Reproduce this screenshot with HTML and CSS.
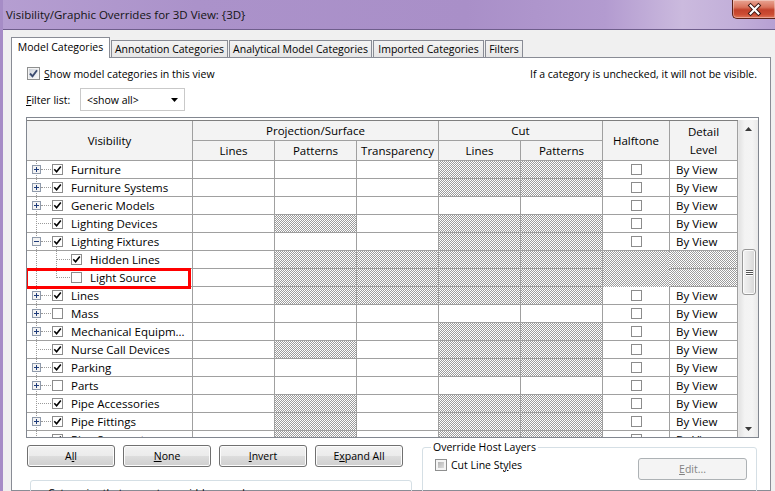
FILE: index.html
```html
<!DOCTYPE html>
<html>
<head>
<meta charset="utf-8">
<title>Visibility/Graphic Overrides</title>
<link rel="stylesheet" href="styles.css">
</head>
<body>
<div class="win">
  <div class="titlebar">
    <span class="title">Visibility/Graphic Overrides for 3D View: {3D}</span>
    <div class="close">
      <svg width="43" height="19" viewBox="0 0 43 19"><path d="M18 5.5 L26 13.5 M26 5.5 L18 13.5" stroke="#3a1510" stroke-width="4.2" stroke-linecap="square"/><path d="M18 5.5 L26 13.5 M26 5.5 L18 13.5" stroke="#fff" stroke-width="2.2" stroke-linecap="square"/></svg>
    </div>
  </div>
  <div class="client">
    <div class="tabs">
      <div class="tab sel">Model Categories</div>
      <div class="tab w-ann">Annotation Categories</div>
      <div class="tab w-anl">Analytical Model Categories</div>
      <div class="tab w-imp">Imported Categories</div>
      <div class="tab w-fil">Filters</div>
    </div>
    <div class="panel">
      <div class="toprow">
        <div class="showchk">
          <span class="wcb"><svg width="11" height="11" viewBox="0 0 11 11"><path d="M2 5.5 L4.5 8.3 L9 2.2" stroke="#3b4b70" stroke-width="1.9" fill="none"/></svg></span>
          <span><u>S</u>how model categories in this view</span>
        </div>
        <span class="hint">If a category is unchecked, it will not be visible.</span>
      </div>
      <div class="filterrow">
        <span class="flabel"><u>F</u>ilter list:</span>
        <div class="combo"><span>&lt;show all&gt;</span><svg width="7" height="4" viewBox="0 0 7 4"><path d="M0 0 H7 L3.5 4 Z" fill="#000"/></svg></div>
      </div>

      <div class="grid">
        <div class="tblarea">
          <div class="hdr">
            <div class="hc r2">Visibility</div>
            <div class="hc c3">Projection/Surface</div>
            <div class="hc c2">Cut</div>
            <div class="hc r2">Halftone</div>
            <div class="hc r2">Detail<br>Level</div>
            <div class="hc">Lines</div>
            <div class="hc">Patterns</div>
            <div class="hc">Transparency</div>
            <div class="hc">Lines</div>
            <div class="hc">Patterns</div>
          </div>
          <div class="rows">
            <!-- Furniture -->
            <div class="row">
              <div class="c tree"><svg class="exp" viewBox="0 0 9 9"><rect x=".5" y=".5" width="8" height="8" fill="#f3f3f3" stroke="#8f9aab"/><path d="M2 4.5h5M4.5 2v5" stroke="#1f3c7a"/></svg><span class="conn"></span><span class="cb"><svg viewBox="0 0 9 9"><path d="M1.3 4.3 L3.6 6.8 L7.8 1.6" stroke="#000" stroke-width="1.6" fill="none"/></svg></span><span class="lbl">Furniture</span></div>
              <div class="c"></div><div class="c"></div><div class="c"></div><div class="c h"></div><div class="c h"></div>
              <div class="c ht"><span class="cb"></span></div><div class="c dl">By View</div>
            </div>
            <!-- Furniture Systems -->
            <div class="row">
              <div class="c tree"><svg class="exp" viewBox="0 0 9 9"><rect x=".5" y=".5" width="8" height="8" fill="#f3f3f3" stroke="#8f9aab"/><path d="M2 4.5h5M4.5 2v5" stroke="#1f3c7a"/></svg><span class="conn"></span><span class="cb"><svg viewBox="0 0 9 9"><path d="M1.3 4.3 L3.6 6.8 L7.8 1.6" stroke="#000" stroke-width="1.6" fill="none"/></svg></span><span class="lbl">Furniture Systems</span></div>
              <div class="c"></div><div class="c"></div><div class="c"></div><div class="c h"></div><div class="c h"></div>
              <div class="c ht"><span class="cb"></span></div><div class="c dl">By View</div>
            </div>
            <!-- Generic Models -->
            <div class="row">
              <div class="c tree"><svg class="exp" viewBox="0 0 9 9"><rect x=".5" y=".5" width="8" height="8" fill="#f3f3f3" stroke="#8f9aab"/><path d="M2 4.5h5M4.5 2v5" stroke="#1f3c7a"/></svg><span class="conn"></span><span class="cb"><svg viewBox="0 0 9 9"><path d="M1.3 4.3 L3.6 6.8 L7.8 1.6" stroke="#000" stroke-width="1.6" fill="none"/></svg></span><span class="lbl">Generic Models</span></div>
              <div class="c"></div><div class="c"></div><div class="c"></div><div class="c"></div><div class="c"></div>
              <div class="c ht"><span class="cb"></span></div><div class="c dl">By View</div>
            </div>
            <!-- Lighting Devices -->
            <div class="row">
              <div class="c tree"><span class="sp"></span><span class="conn long"></span><span class="cb"><svg viewBox="0 0 9 9"><path d="M1.3 4.3 L3.6 6.8 L7.8 1.6" stroke="#000" stroke-width="1.6" fill="none"/></svg></span><span class="lbl">Lighting Devices</span></div>
              <div class="c"></div><div class="c h"></div><div class="c"></div><div class="c h"></div><div class="c h"></div>
              <div class="c ht"><span class="cb"></span></div><div class="c dl">By View</div>
            </div>
            <!-- Lighting Fixtures -->
            <div class="row">
              <div class="c tree parent"><svg class="exp" viewBox="0 0 9 9"><rect x=".5" y=".5" width="8" height="8" fill="#f3f3f3" stroke="#8f9aab"/><path d="M2 4.5h5" stroke="#1f3c7a"/></svg><span class="conn"></span><span class="cb"><svg viewBox="0 0 9 9"><path d="M1.3 4.3 L3.6 6.8 L7.8 1.6" stroke="#000" stroke-width="1.6" fill="none"/></svg></span><span class="lbl">Lighting Fixtures</span></div>
              <div class="c"></div><div class="c"></div><div class="c"></div><div class="c h"></div><div class="c h"></div>
              <div class="c ht"><span class="cb"></span></div><div class="c dl">By View</div>
            </div>
            <!-- Hidden Lines -->
            <div class="row">
              <div class="c tree child"><span class="csp"></span><span class="conn child-conn"></span><span class="cb"><svg viewBox="0 0 9 9"><path d="M1.3 4.3 L3.6 6.8 L7.8 1.6" stroke="#000" stroke-width="1.6" fill="none"/></svg></span><span class="lbl">Hidden Lines</span></div>
              <div class="c"></div><div class="c h"></div><div class="c h"></div><div class="c h"></div><div class="c h"></div>
              <div class="c h"></div><div class="c h"></div>
            </div>
            <!-- Light Source -->
            <div class="row">
              <div class="c tree child last"><span class="csp"></span><span class="conn child-conn"></span><span class="cb"></span><span class="lbl">Light Source</span><span class="hilite"></span></div>
              <div class="c"></div><div class="c h"></div><div class="c h"></div><div class="c h"></div><div class="c h"></div>
              <div class="c h"></div><div class="c h"></div>
            </div>
            <!-- Lines -->
            <div class="row">
              <div class="c tree"><svg class="exp" viewBox="0 0 9 9"><rect x=".5" y=".5" width="8" height="8" fill="#f3f3f3" stroke="#8f9aab"/><path d="M2 4.5h5M4.5 2v5" stroke="#1f3c7a"/></svg><span class="conn"></span><span class="cb"><svg viewBox="0 0 9 9"><path d="M1.3 4.3 L3.6 6.8 L7.8 1.6" stroke="#000" stroke-width="1.6" fill="none"/></svg></span><span class="lbl">Lines</span></div>
              <div class="c"></div><div class="c h"></div><div class="c h"></div><div class="c h"></div><div class="c h"></div>
              <div class="c ht"><span class="cb"></span></div><div class="c dl">By View</div>
            </div>
            <!-- Mass -->
            <div class="row">
              <div class="c tree"><svg class="exp" viewBox="0 0 9 9"><rect x=".5" y=".5" width="8" height="8" fill="#f3f3f3" stroke="#8f9aab"/><path d="M2 4.5h5M4.5 2v5" stroke="#1f3c7a"/></svg><span class="conn"></span><span class="cb"></span><span class="lbl">Mass</span></div>
              <div class="c"></div><div class="c"></div><div class="c"></div><div class="c"></div><div class="c"></div>
              <div class="c ht"><span class="cb"></span></div><div class="c dl">By View</div>
            </div>
            <!-- Mechanical Equipment -->
            <div class="row">
              <div class="c tree"><svg class="exp" viewBox="0 0 9 9"><rect x=".5" y=".5" width="8" height="8" fill="#f3f3f3" stroke="#8f9aab"/><path d="M2 4.5h5M4.5 2v5" stroke="#1f3c7a"/></svg><span class="conn"></span><span class="cb"><svg viewBox="0 0 9 9"><path d="M1.3 4.3 L3.6 6.8 L7.8 1.6" stroke="#000" stroke-width="1.6" fill="none"/></svg></span><span class="lbl">Mechanical Equipm...</span></div>
              <div class="c"></div><div class="c"></div><div class="c"></div><div class="c h"></div><div class="c h"></div>
              <div class="c ht"><span class="cb"></span></div><div class="c dl">By View</div>
            </div>
            <!-- Nurse Call Devices -->
            <div class="row">
              <div class="c tree"><span class="sp"></span><span class="conn long"></span><span class="cb"><svg viewBox="0 0 9 9"><path d="M1.3 4.3 L3.6 6.8 L7.8 1.6" stroke="#000" stroke-width="1.6" fill="none"/></svg></span><span class="lbl">Nurse Call Devices</span></div>
              <div class="c"></div><div class="c h"></div><div class="c"></div><div class="c h"></div><div class="c h"></div>
              <div class="c ht"><span class="cb"></span></div><div class="c dl">By View</div>
            </div>
            <!-- Parking -->
            <div class="row">
              <div class="c tree"><svg class="exp" viewBox="0 0 9 9"><rect x=".5" y=".5" width="8" height="8" fill="#f3f3f3" stroke="#8f9aab"/><path d="M2 4.5h5M4.5 2v5" stroke="#1f3c7a"/></svg><span class="conn"></span><span class="cb"><svg viewBox="0 0 9 9"><path d="M1.3 4.3 L3.6 6.8 L7.8 1.6" stroke="#000" stroke-width="1.6" fill="none"/></svg></span><span class="lbl">Parking</span></div>
              <div class="c"></div><div class="c"></div><div class="c"></div><div class="c h"></div><div class="c h"></div>
              <div class="c ht"><span class="cb"></span></div><div class="c dl">By View</div>
            </div>
            <!-- Parts -->
            <div class="row">
              <div class="c tree"><svg class="exp" viewBox="0 0 9 9"><rect x=".5" y=".5" width="8" height="8" fill="#f3f3f3" stroke="#8f9aab"/><path d="M2 4.5h5M4.5 2v5" stroke="#1f3c7a"/></svg><span class="conn"></span><span class="cb"></span><span class="lbl">Parts</span></div>
              <div class="c"></div><div class="c"></div><div class="c"></div><div class="c"></div><div class="c"></div>
              <div class="c ht"><span class="cb"></span></div><div class="c dl">By View</div>
            </div>
            <!-- Pipe Accessories -->
            <div class="row">
              <div class="c tree"><span class="sp"></span><span class="conn long"></span><span class="cb"><svg viewBox="0 0 9 9"><path d="M1.3 4.3 L3.6 6.8 L7.8 1.6" stroke="#000" stroke-width="1.6" fill="none"/></svg></span><span class="lbl">Pipe Accessories</span></div>
              <div class="c"></div><div class="c h"></div><div class="c"></div><div class="c h"></div><div class="c h"></div>
              <div class="c ht"><span class="cb"></span></div><div class="c dl">By View</div>
            </div>
            <!-- Pipe Fittings -->
            <div class="row">
              <div class="c tree"><svg class="exp" viewBox="0 0 9 9"><rect x=".5" y=".5" width="8" height="8" fill="#f3f3f3" stroke="#8f9aab"/><path d="M2 4.5h5M4.5 2v5" stroke="#1f3c7a"/></svg><span class="conn"></span><span class="cb"><svg viewBox="0 0 9 9"><path d="M1.3 4.3 L3.6 6.8 L7.8 1.6" stroke="#000" stroke-width="1.6" fill="none"/></svg></span><span class="lbl">Pipe Fittings</span></div>
              <div class="c"></div><div class="c h"></div><div class="c"></div><div class="c h"></div><div class="c h"></div>
              <div class="c ht"><span class="cb"></span></div><div class="c dl">By View</div>
            </div>
            <!-- Pipe Segments -->
            <div class="row">
              <div class="c tree"><span class="sp"></span><span class="conn long"></span><span class="cb"><svg viewBox="0 0 9 9"><path d="M1.3 4.3 L3.6 6.8 L7.8 1.6" stroke="#000" stroke-width="1.6" fill="none"/></svg></span><span class="lbl">Pipe Segments</span></div>
              <div class="c"></div><div class="c h"></div><div class="c"></div><div class="c h"></div><div class="c h"></div>
              <div class="c ht"><span class="cb"></span></div><div class="c dl">By View</div>
            </div>
          </div>
        </div>
        <div class="vscroll">
          <div class="sbtn"><svg width="7" height="4" viewBox="0 0 7 4"><path d="M0 4 H7 L3.5 0 Z" fill="#3a3a3a"/></svg></div>
          <div class="thumb"><span></span><span></span><span></span></div>
          <div class="track"></div>
          <div class="sbtn"><svg width="7" height="4" viewBox="0 0 7 4"><path d="M0 0 H7 L3.5 4 Z" fill="#3a3a3a"/></svg></div>
        </div>
      </div>

      <div class="lower">
        <div class="leftcol">
          <div class="btns">
            <div class="btn">A<u>l</u>l</div>
            <div class="btn"><u>N</u>one</div>
            <div class="btn"><u>I</u>nvert</div>
            <div class="btn">E<u>x</u>pand All</div>
          </div>
          <div class="note">Categories that are not overridden are drawn<br>according to Object Style settings.</div>
        </div>
        <fieldset class="host">
          <legend>Override Host Layers</legend>
          <div class="hostrow">
            <span class="gcb"></span>
            <span class="hlabel">Cut Line St<u>y</u>les</span>
            <div class="btn dis"><u>E</u>dit...</div>
          </div>
        </fieldset>
      </div>
    </div>
  </div>
</div>
</body>
</html>
```

FILE: styles.css
```css
* { box-sizing: border-box; }
html, body { margin: 0; padding: 0; }
body {
  width: 775px;
  height: 491px;
  overflow: hidden;
  background: #f0f0f0;
  font-family: "Segoe UI", "Open Sans", sans-serif;
  font-size: 10.5px;
  color: #000;
}
u { text-decoration: underline; text-underline-offset: 1px; }

.win {
  height: 491px;
  display: flex;
  flex-direction: column;
  border-left: 3px solid #a68cc6;
}

/* title bar */
.titlebar {
  height: 30px;
  flex: none;
  display: flex;
  align-items: flex-start;
  padding-left: 3px;
  background: linear-gradient(90deg, #b59ed1 0%, #ab92ca 25%, #a98fc8 60%, #b39bd0 78%, #cbbade 88%, #c2afd9 95%, #b7a0d3 100%);
  border-bottom: 1px solid #6f5e8c;
}
.title {
  line-height: 29px;
  font-size: 11.5px;
  color: #141414;
}
.close {
  margin-left: auto;
  width: 43px;
  height: 19px;
  border: 1px solid #5b2118;
  border-top: none;
  border-right: none;
  border-radius: 0 0 0 5px;
  background: linear-gradient(#e9a594 0%, #d9735c 40%, #c2412b 55%, #cc4c33 80%, #e0775b 100%);
  box-shadow: inset 0 0 0 1px rgba(255,255,255,0.35);
  display: flex;
}
.close svg { display: block; }

/* client */
.client {
  flex: 1;
  display: flex;
  flex-direction: column;
  padding: 7px 0 0 8px;
  min-height: 0;
}
.tabs {
  height: 20px;
  display: flex;
  align-items: flex-end;
  flex: none;
}
.tab {
  height: 17px;
  border: 1px solid #898c95;
  border-bottom: none;
  background: linear-gradient(#f3f3f3, #e6e6e6);
  display: flex;
  align-items: center;
  justify-content: center;
  white-space: nowrap;
  margin-left: 1px;
  line-height: 15px;
}
.tab.sel {
  width: 99px;
  height: 21px;
  margin-left: 0;
  margin-bottom: -1px;
  background: #fff;
  position: relative;
  z-index: 1;
  padding-bottom: 2px;
}
.w-ann { width: 117px; }
.w-anl { width: 143px; }
.w-imp { width: 111px; }
.w-fil { width: 38px; }

.panel {
  width: 760px;
  flex: 1;
  min-height: 0;
  background: #fff;
  border: 1px solid #898c95;
  padding: 9px 13px 0 14px;
  display: flex;
  flex-direction: column;
}

.toprow {
  display: flex;
  align-items: center;
  justify-content: space-between;
  height: 13px;
  margin-left: 1px;
}
.showchk { display: flex; align-items: center; gap: 4px; }
.wcb {
  width: 13px;
  height: 13px;
  border: 1px solid #8e8f8f;
  background: linear-gradient(135deg, #c9ced6, #eef0f3 70%, #fafafa);
  box-shadow: inset 0 0 0 1px #f4f4f4;
  display: flex;
  align-items: center;
  justify-content: center;
}
.wcb svg { display: block; }

.filterrow {
  display: flex;
  align-items: center;
  margin-top: 8px;
  height: 23px;
}
.flabel { width: 54px; }
.combo {
  width: 105px;
  height: 23px;
  border: 1px solid #c9c9c9;
  background: #fff;
  display: flex;
  align-items: center;
  justify-content: space-between;
  padding: 0 6px 0 6px;
}

/* grid */
.grid {
  margin-top: 6px;
  width: 733px;
  height: 321px;
  flex: none;
  border: 1px solid #828790;
  padding-top: 2px;
  display: flex;
  background: #fff;
  font-size: 11.5px;
}
.tblarea {
  width: 711px;
  height: 317px;
  overflow: hidden;
}
.hdr {
  display: grid;
  grid-template-columns: 166px repeat(5, 82px) 67px 68px;
  grid-template-rows: 20px 20px;
  border-top: 1px solid #7f7f7f;
  background: #f3f3f3;
}
.hc {
  border-right: 1px solid #a0a0a0;
  border-bottom: 1px solid #a0a0a0;
  display: flex;
  align-items: center;
  justify-content: center;
  text-align: center;
  line-height: 18px;
}
.hc.r2 { grid-row: span 2; }
.hc.c3 { grid-column: span 3; }
.hc.c2 { grid-column: span 2; }

.row {
  display: grid;
  grid-template-columns: 166px repeat(5, 82px) 67px 68px;
  height: 18px;
}
.c {
  border-right: 1px solid #a0a0a0;
  border-bottom: 1px solid #a0a0a0;
  background: #fff;
  min-width: 0;
}
.c.h {
  background: repeating-conic-gradient(#9c9c9c 0% 25%, #ffffff 0% 50%) 0 0 / 2px 2px;
  border-right-style: dotted;
  border-bottom-style: dotted;
}
.ht { display: flex; align-items: center; justify-content: center; }
.dl { padding-left: 6px; line-height: 17px; white-space: nowrap; }

.tree {
  display: flex;
  align-items: center;
  padding-left: 5px;
  white-space: nowrap;
  position: relative;
  background:
    repeating-linear-gradient(180deg, #9a9a9a 0 1px, transparent 1px 2px) 9px 0 / 1px 100% no-repeat,
    #fff;
}
.tree.child {
  background:
    repeating-linear-gradient(180deg, #9a9a9a 0 1px, transparent 1px 2px) 9px 0 / 1px 100% no-repeat,
    repeating-linear-gradient(180deg, #9a9a9a 0 1px, transparent 1px 2px) 29px 0 / 1px 100% no-repeat,
    #fff;
}
.tree.child.last {
  background:
    repeating-linear-gradient(180deg, #9a9a9a 0 1px, transparent 1px 2px) 9px 0 / 1px 100% no-repeat,
    repeating-linear-gradient(180deg, #9a9a9a 0 1px, transparent 1px 2px) 29px 0 / 1px 9px no-repeat,
    #fff;
}
.tree.parent {
  background:
    repeating-linear-gradient(180deg, #9a9a9a 0 1px, transparent 1px 2px) 9px 0 / 1px 100% no-repeat,
    repeating-linear-gradient(180deg, #9a9a9a 0 1px, transparent 1px 2px) 29px 14px / 1px 4px no-repeat,
    #fff;
}
.exp { width: 9px; height: 9px; flex: none; display: block; }
.sp { width: 4px; flex: none; }
.csp { width: 24px; flex: none; }
.conn {
  width: 10px;
  height: 0;
  flex: none;
  border-top: 1px dotted #9a9a9a;
}
.conn.long { width: 15px; }
.conn.child-conn { width: 14px; }
.cb {
  width: 11px;
  height: 11px;
  flex: none;
  border: 1px solid #8c8c8c;
  background: #fff;
  display: flex;
  align-items: center;
  justify-content: center;
  margin-left: 1px;
}
.ht .cb { margin-left: 0; }
.cb svg { width: 9px; height: 9px; display: block; }
.lbl { margin-left: 8px; line-height: 17px; }

.hilite {
  position: absolute;
  left: -2px;
  top: -1px;
  width: 166px;
  height: 21px;
  border: 3px solid #ff0000;
  z-index: 2;
}

/* scrollbar */
.vscroll {
  width: 20px;
  display: flex;
  flex-direction: column;
  background: linear-gradient(90deg, #e3e3e3, #f3f3f3 30%, #f4f4f4 70%, #e9e9e9);
  border-left: 1px solid #e8e8e8;
}
.sbtn {
  height: 17px;
  flex: none;
  display: flex;
  align-items: center;
  justify-content: center;
}
.sbtn svg { display: block; }
.thumb {
  margin: 112px 2px 0 3px;
  height: 46px;
  flex: none;
  border: 1px solid #979797;
  border-radius: 3px;
  background: linear-gradient(90deg, #f2f2f2, #e6e6e6 50%, #d6d6d6);
  box-shadow: inset 0 0 0 1px #fbfbfb;
  display: flex;
  flex-direction: column;
  align-items: center;
  justify-content: center;
  gap: 1px;
}
.thumb span {
  width: 7px;
  height: 1px;
  background: #555;
  box-shadow: 0 1px 0 #fff;
}
.track { flex: 1; }

/* lower */
.lower {
  display: flex;
  align-items: flex-start;
  padding-left: 1px;
}
.leftcol { width: 385px; flex: none; }
.btns {
  display: flex;
  gap: 8px;
  margin-top: 7px;
}
.btn {
  width: 88px;
  height: 22px;
  border: 1px solid #707070;
  border-radius: 3px;
  background: linear-gradient(#f2f2f2 0%, #ebebeb 50%, #dddddd 51%, #cfcfcf 100%);
  box-shadow: inset 0 0 0 1px #fcfcfc;
  display: flex;
  align-items: center;
  justify-content: center;
  line-height: 15px;
}
.btn.dis {
  width: 109px;
  border-color: #adb2b5;
  background: #f4f4f4;
  box-shadow: none;
  color: #838383;
  margin-left: auto;
}
.note {
  margin: 13px 0 0 3px;
  width: 382px;
  height: 40px;
  border: 1px solid #d5dfe5;
  border-radius: 3px;
  padding: 5px 0 0 17px;
  line-height: 14px;
  white-space: nowrap;
  overflow: hidden;
}
.host {
  margin: 1px 0 0 10px;
  padding: 0 9px 0 12px;
  width: 336px;
  height: 60px;
  border: 1px solid #d5dfe5;
  border-radius: 3px;
  min-width: 0;
}
.host legend {
  padding: 0 2px;
  margin-left: -4px;
  line-height: 16px;
}
.hostrow {
  display: flex;
  align-items: flex-start;
  margin-top: 3px;
}
.gcb {
  width: 12px;
  height: 12px;
  flex: none;
  border: 1px solid #8e8f8f;
  background: linear-gradient(135deg, #a9a9a9, #dcdcdc 80%);
  box-shadow: inset 0 0 0 2px #f4f4f4;
  margin-top: 1px;
}
.hlabel { margin-left: 4px; line-height: 14px; }
```
